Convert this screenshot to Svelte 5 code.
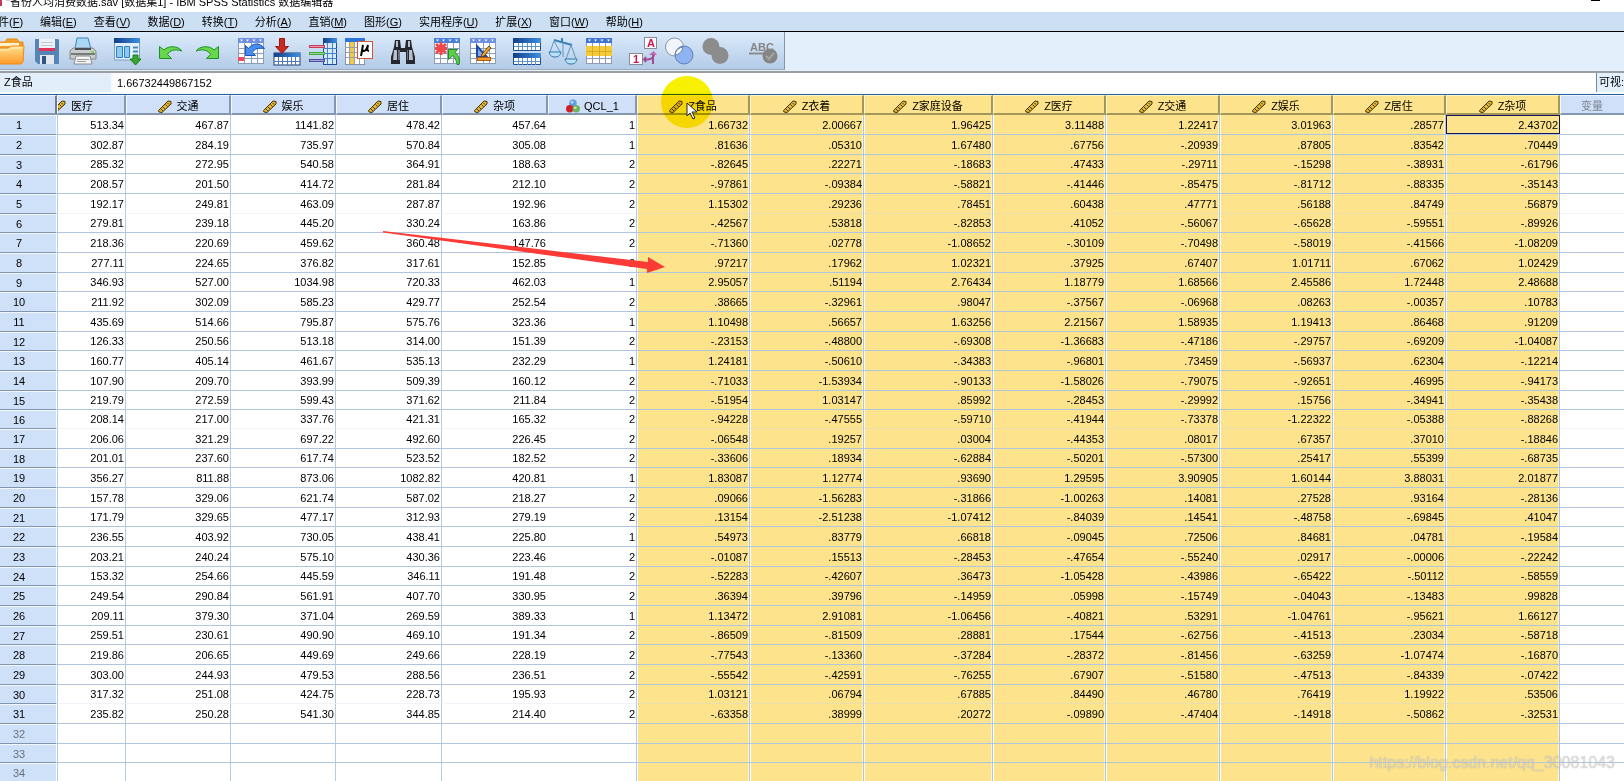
<script>
  const menus = [
    ['文件', 'F'], ['编辑', 'E'], ['查看', 'V'], ['数据', 'D'], ['转换', 'T'], ['分析', 'A'],
    ['直销', 'M'], ['图形', 'G'], ['实用程序', 'U'], ['扩展', 'X'], ['窗口', 'W'], ['帮助', 'H'],
  ];

  const toolGroups = [
    [['open', '打开'], ['save', '保存'], ['print', '打印']],
    [['recall', '重新调用对话框']],
    [['undo', '撤销'], ['redo', '重做']],
    [['gotocase', '转到个案'], ['gotovar', '转到变量'], ['vars', '变量'], ['stats', '运行描述统计']],
    [['find', '查找']],
    [['insertcase', '插入个案'], ['insertvar', '插入变量']],
    [['split', '拆分文件'], ['weight', '个案加权'], ['select', '选择个案']],
    [['labels', '值标签'], ['sets', '使用变量集'], ['all', '显示所有变量']],
    [['spell', '拼写检查']],
  ];

  const columns = [
    { name: '医疗', width: 69, clipped: true },
    { name: '交通', width: 105 },
    { name: '娱乐', width: 105 },
    { name: '居住', width: 106 },
    { name: '杂项', width: 106, open: true },
    { name: 'QCL_1', width: 89, nominal: true },
    { name: 'Z食品', width: 113, selected: true },
    { name: 'Z衣着', width: 114, selected: true },
    { name: 'Z家庭设备', width: 129, selected: true },
    { name: 'Z医疗', width: 113, selected: true },
    { name: 'Z交通', width: 114, selected: true },
    { name: 'Z娱乐', width: 113, selected: true },
    { name: 'Z居住', width: 113, selected: true },
    { name: 'Z杂项', width: 114, selected: true },
  ];

  const rows = `513.34 467.87 1141.82 478.42 457.64 1 1.66732 2.00667 1.96425 3.11488 1.22417 3.01963 .28577 2.43702
302.87 284.19 735.97 570.84 305.08 1 .81636 .05310 1.67480 .67756 -.20939 .87805 .83542 .70449
285.32 272.95 540.58 364.91 188.63 2 -.82645 .22271 -.18683 .47433 -.29711 -.15298 -.38931 -.61796
208.57 201.50 414.72 281.84 212.10 2 -.97861 -.09384 -.58821 -.41446 -.85475 -.81712 -.88335 -.35143
192.17 249.81 463.09 287.87 192.96 2 1.15302 .29236 .78451 .60438 .47771 .56188 .84749 .56879
279.81 239.18 445.20 330.24 163.86 2 -.42567 .53818 -.82853 .41052 -.56067 -.65628 -.59551 -.89926
218.36 220.69 459.62 360.48 147.76 2 -.71360 .02778 -1.08652 -.30109 -.70498 -.58019 -.41566 -1.08209
277.11 224.65 376.82 317.61 152.85 2 .97217 .17962 1.02321 .37925 .67407 1.01711 .67062 1.02429
346.93 527.00 1034.98 720.33 462.03 1 2.95057 .51194 2.76434 1.18779 1.68566 2.45586 1.72448 2.48688
211.92 302.09 585.23 429.77 252.54 2 .38665 -.32961 .98047 -.37567 -.06968 .08263 -.00357 .10783
435.69 514.66 795.87 575.76 323.36 1 1.10498 .56657 1.63256 2.21567 1.58935 1.19413 .86468 .91209
126.33 250.56 513.18 314.00 151.39 2 -.23153 -.48800 -.69308 -1.36683 -.47186 -.29757 -.69209 -1.04087
160.77 405.14 461.67 535.13 232.29 1 1.24181 -.50610 -.34383 -.96801 .73459 -.56937 .62304 -.12214
107.90 209.70 393.99 509.39 160.12 2 -.71033 -1.53934 -.90133 -1.58026 -.79075 -.92651 .46995 -.94173
219.79 272.59 599.43 371.62 211.84 2 -.51954 1.03147 .85992 -.28453 -.29992 .15756 -.34941 -.35438
208.14 217.00 337.76 421.31 165.32 2 -.94228 -.47555 -.59710 -.41944 -.73378 -1.22322 -.05388 -.88268
206.06 321.29 697.22 492.60 226.45 2 -.06548 .19257 .03004 -.44353 .08017 .67357 .37010 -.18846
201.01 237.60 617.74 523.52 182.52 2 -.33606 .18934 -.62884 -.50201 -.57300 .25417 .55399 -.68735
356.27 811.88 873.06 1082.82 420.81 1 1.83087 1.12774 .93690 1.29595 3.90905 1.60144 3.88031 2.01877
157.78 329.06 621.74 587.02 218.27 2 .09066 -1.56283 -.31866 -1.00263 .14081 .27528 .93164 -.28136
171.79 329.65 477.17 312.93 279.19 2 .13154 -2.51238 -1.07412 -.84039 .14541 -.48758 -.69845 .41047
236.55 403.92 730.05 438.41 225.80 1 .54973 .83779 .66818 -.09045 .72506 .84681 .04781 -.19584
203.21 240.24 575.10 430.36 223.46 2 -.01087 .15513 -.28453 -.47654 -.55240 .02917 -.00006 -.22242
153.32 254.66 445.59 346.11 191.48 2 -.52283 -.42607 .36473 -1.05428 -.43986 -.65422 -.50112 -.58559
249.54 290.84 561.91 407.70 330.95 2 .36394 .39796 -.14959 .05998 -.15749 -.04043 -.13483 .99828
209.11 379.30 371.04 269.59 389.33 1 1.13472 2.91081 -1.06456 -.40821 .53291 -1.04761 -.95621 1.66127
259.51 230.61 490.90 469.10 191.34 2 -.86509 -.81509 .28881 .17544 -.62756 -.41513 .23034 -.58718
219.86 206.65 449.69 249.66 228.19 2 -.77543 -.13360 -.37284 -.28372 -.81456 -.63259 -1.07474 -.16870
303.00 244.93 479.53 288.56 236.51 2 -.55542 -.42591 -.76255 .67907 -.51580 -.47513 -.84339 -.07422
317.32 251.08 424.75 228.73 195.93 2 1.03121 .06794 .67885 .84490 .46780 .76419 1.19922 .53506
235.82 250.28 541.30 344.85 214.40 2 -.63358 .38999 .20272 -.09890 -.47404 -.14918 -.50862 -.32531`
    .split('\n')
    .map((line) => line.split(' '));

  const blank = columns.map(() => '');
  const grid = [...rows, blank, blank, blank];
  const faintRows = [5, 16, 30];

  let active = $state({ row: 0, col: 13 });
  let cellValue = $state('1.66732449867152');
</script>

{#snippet gridLines(top)}
  <rect x="1" y="1" width="26" height="26" fill="#fff" />
  <rect x="1" y="1" width="26" height="5" fill={top} />
  <path d="M1.500 6V27M7.500 6V27M14.500 6V27M20.500 6V27M26.500 6V27M1 11.500H27M1 16.500H27M1 21.500H27M1 26.500H27" stroke="#8d9db8" fill="none" />
  <path d="M3 2.500h3l-1.500 2zM9 2.500h3l-1.500 2zM15.500 2.500h3l-1.500 2zM22 2.500h3l-1.500 2z" fill="#fff" />
{/snippet}

{#snippet toolIcon(name)}
  <svg class="tool-icon" viewBox="0 0 28 28" aria-hidden="true">
    {#if name === 'open'}
      <path d="M1 5h7l2-3h10l2 3h4v18H1z" fill="#f0a02a" stroke="#e8890f" />
      <path d="M3 6h19v3H3z" fill="#fff3cf" />
      <path d="M1 11h10l3-2h13l-1 16-2 2H1z" fill="url(#folder)" stroke="#f08a1c" />
      <path d="M2 13h10l3-2h10" stroke="#fff0c4" fill="none" />
    {:else if name === 'save'}
      <path d="M2 2h23l1 1v24H5l-3-3z" fill="#5586b3" />
      <rect x="6" y="2" width="16" height="12" fill="#eef1f8" />
      <path d="M8 5.500h12M8 8.500h12" stroke="#c3c8d6" />
      <rect x="6" y="11" width="16" height="3" fill="#e0325c" />
      <rect x="7" y="18" width="14" height="9" fill="#e4e8ee" />
      <rect x="9" y="19" width="4" height="8" fill="#2f557f" />
    {:else if name === 'print'}
      <path d="M8 1h11l3 11H6z" fill="#a9d7f4" stroke="#3f84ba" />
      <path d="M4 11h20l3 3v8H1v-8z" fill="#c9cbcc" stroke="#858789" />
      <rect x="6" y="11" width="16" height="2" fill="#4c4f51" />
      <path d="M2 17h24" stroke="#77797b" stroke-width="2" />
      <path d="M7 19h14l2 8H5z" fill="#f6f6f6" stroke="#8b8b8b" />
      <path d="M8 22.500h12M8 24.500h9" stroke="#999" />
      <rect x="22" y="14" width="3" height="2" fill="#7fdc52" />
    {:else if name === 'recall'}
      <rect x="1.500" y="2" width="25" height="21" fill="#dff0fb" stroke="#7f9fc0" />
      <rect x="1" y="1" width="26" height="5" fill="url(#bar)" />
      <path d="M3.500 9.500h6v11h-6zM11.500 9.500h5v11h-5z" fill="#8bc9f2" stroke="#2f7fc0" />
      <path d="M20 10.500h5M20 14.500h5" stroke="#4d87c2" stroke-width="2" />
      <path d="M20 18h5v4h3l-5.500 6-5.500-6h3z" fill="#36a72f" stroke="#1c7a1b" />
    {:else if name === 'undo'}
      <path d="M2.500 9.500v12h12l-4-4c2-4 7-6 14.500-3.500-4-5-13-6-18-1z" fill="#6ad64a" stroke="#17932a" />
    {:else if name === 'redo'}
      <path d="M25.500 9.500v12h-12l4-4c-2-4-7-6-14.500-3.500 4-5 13-6 18-1z" fill="#6ad64a" stroke="#17932a" />
    {:else if name === 'gotocase'}
      {@render gridLines('#6f8fe0')}
      <rect x="1" y="20" width="6" height="4" fill="#ee4a62" />
      <path d="M8.500 8.500v10h10l-3-3c2-4 6-5 12-4-4-6-12-6-16 0z" fill="#4a8df0" stroke="#1b56b8" />
    {:else if name === 'gotovar'}
      <rect x="1" y="16" width="26" height="12" fill="#fff" stroke="#1b3f78" />
      <rect x="1" y="16" width="26" height="4" fill="url(#bar)" />
      <path d="M5.500 20v8M9.500 20v8M14.500 20v8M18.500 20v8M22.500 20v8M1 24.500h26" stroke="#4e78b8" />
      <path d="M6.500 1.500h5v8h4l-6.500 7-6.500-7h4z" fill="#c92a24" stroke="#9c1a16" />
    {:else if name === 'vars'}
      <rect x="14.500" y="1.500" width="13" height="26" fill="#d5ebfc" stroke="#1d4f96" />
      <rect x="14" y="1" width="14" height="5" fill="url(#bar)" />
      <path d="M18.500 6v21M23.500 6v21M14 11.500h14M14 16.500h14M14 21.500h14" stroke="#4682c6" />
      <path d="M0 9.500h16" stroke="#c93a5c" stroke-width="3" />
      <path d="M0 16.500h16" stroke="#3fa836" stroke-width="3" />
      <path d="M0 23.500h16" stroke="#4b4ba5" stroke-width="3" />
      <path d="M1 9.500h14M1 16.500h14M1 23.500h14" stroke="#fff" stroke-opacity=".5" />
    {:else if name === 'stats'}
      <rect x="0.500" y="1.500" width="19" height="26" fill="#fff" stroke="#8794a8" />
      <rect x="0" y="1" width="20" height="4" fill="#2d74d8" />
      <rect x="4" y="5" width="5" height="22" fill="#f0c94a" />
      <path d="M4.500 5v22M9.500 5v22M14.500 5v22M0 10.500h20M0 15.500h20M0 20.500h20" stroke="#9a9fa8" />
      <rect x="12.500" y="4.500" width="15" height="17" fill="#fff" stroke="#d8553a" />
      <path d="M18 8l-2 11M18 8c-1 4-1 6 1 6s3-3 4-6c-1 4-1 6 1 6" stroke="#000" stroke-width="2" fill="none" />
    {:else if name === 'find'}
      <path d="M6 3h5l1 8h4l1-8h5l1 7 3 10v7h-9V15h-6v12H2v-7l3-10z" fill="#25272d" />
      <path d="M7 4h2v6H7zM19 4h2v6h-2zM5 13h3v10H4zM20 13h3l1 10h-4z" fill="#b9bfcc" />
      <path d="M9 13h2v10H9zM18 13h1v10h-1z" fill="#6c7280" />
    {:else if name === 'insertcase'}
      {@render gridLines('#4a7fdc')}
      <path d="M8 5v13M3 7l10 9M13 7L3 16M2 11.500h12" stroke="#f04848" stroke-width="3" />
      <path d="M15.500 12.500h9l-2.500 3c4 3 5 7 4 12h-2c-1-5-2-7-4-9l-4.500 4z" fill="#5fd044" stroke="#1e8a2b" />
    {:else if name === 'insertvar'}
      {@render gridLines('#6f8fe0')}
      <path d="M8 9v11h10z" fill="#7fa8ea" stroke="#1b4ba5" stroke-width="2" />
      <path d="M20 9l2 2-7 8-3 1 1-3z" fill="#eea42a" stroke="#6b4310" />
      <rect x="8.500" y="20.500" width="13" height="3" fill="#f39a2c" stroke="#b35a08" />
    {:else if name === 'split'}
      <path d="M.5 1.500h27v12H.5zM.5 16.500h27v11H.5z" fill="#fff" stroke="#1d4f96" />
      <path d="M0 1h28v5H0zM0 16h28v5H0z" fill="url(#bar)" />
      <path d="M5.500 6v7M9.500 6v7M14.500 6v7M18.500 6v7M22.500 6v7M1 9.500h26M5.500 21v7M9.500 21v7M14.500 21v7M18.500 21v7M22.500 21v7M1 24.500h26" stroke="#5b93cc" />
    {:else if name === 'weight'}
      <path d="M13 1v5M5 3l18 5" stroke="#3c80b5" stroke-width="2" fill="none" />
      <path d="M5 4L1 15M5 4l6 11M22 8l-5 14M22 8l5 14M14 6v14" stroke="#5b97c4" fill="none" />
      <path d="M0 15h12c-1 4-3 5-6 5s-5-1-6-5zM16 22h12c-1 4-3 5-6 5s-5-1-6-5z" fill="#b9e2f5" stroke="#2f78ae" />
    {:else if name === 'select'}
      {@render gridLines('#3f74d0')}
      <rect x="1" y="9" width="26" height="10" fill="#f4cb3c" />
      <path d="M1 14.500h26M7.500 9v10M14.500 9v10M20.500 9v10" stroke="#d9ab24" />
    {:else if name === 'labels'}
      <rect x="15.500" y=".5" width="12" height="11" fill="#fff" stroke="#8b8b95" />
      <text x="22" y="10" class="glyph">A</text>
      <rect x=".5" y="16.500" width="13" height="11" fill="#fff" stroke="#8b8b95" />
      <text x="7" y="26" class="glyph">1</text>
      <path d="M24 27V17M15 22.500h5M17 20l-2 2.500 2 2.500M25 17c0 4-3 5-6 5.500" stroke="#a04a94" stroke-width="2" fill="none" />
      <path d="M20 18l4.500-4 3.500 4z" fill="#c266b4" />
    {:else if name === 'sets'}
      <circle cx="9.500" cy="10" r="9" fill="#f3f5fa" stroke="#8a94a8" />
      <circle cx="19" cy="18" r="9" fill="#8fb3f0" stroke="#5f7fb5" />
      <path d="M10 18a9 9 0 0 1 8-8 9 9 0 0 1-8 8z" fill="#fff" stroke="#6681ab" />
    {:else if name === 'all'}
      <circle cx="10" cy="9.500" r="8.500" fill="#8c8c8c" />
      <circle cx="19" cy="18.500" r="8.500" fill="#8c8c8c" />
    {:else}
      <text x="13" y="14" class="glyph abc">ABC</text>
      <path d="M0 16.500h16" stroke="#8a8a8a" stroke-width="2" />
      <circle cx="21" cy="19" r="7.500" fill="#858585" />
      <path d="M17 19l3 3 5-6" stroke="#a5a5a5" stroke-width="2" fill="none" />
    {/if}
  </svg>
{/snippet}

{#snippet scaleIcon()}
  <svg class="measure" viewBox="0 0 14 13" aria-hidden="true">
    <path d="M.5 10.500L10 1l3 .5V4L4 12.500 1 12z" fill="#e9b92c" stroke="#3e3210" />
    <path d="M3 9l2 2M5 7l2 2M7.500 4.500l2 2M9.500 3l1.500 1.500" stroke="#3e3210" />
  </svg>
{/snippet}

{#snippet nominalIcon()}
  <svg class="measure nominal" viewBox="0 0 16 15" aria-hidden="true">
    <circle cx="8" cy="4.500" r="4" fill="#5b9fe0" />
    <circle cx="4.500" cy="10.500" r="4" fill="#cf1f2c" />
    <circle cx="11.500" cy="10.500" r="4" fill="#6cb35c" />
    <circle cx="7" cy="3.500" r="1.500" fill="#b5d7f7" />
    <circle cx="10.500" cy="9.500" r="1.500" fill="#c4e6b8" />
  </svg>
{/snippet}

<svg class="defs" width="0" height="0" aria-hidden="true">
  <defs>
    <linearGradient id="folder" x1="0" y1="0" x2="0" y2="1">
      <stop offset="0" stop-color="#ffe08a" />
      <stop offset="1" stop-color="#fb9a2a" />
    </linearGradient>
    <linearGradient id="bar" x1="0" y1="0" x2="1" y2="0">
      <stop offset="0" stop-color="#123f88" />
      <stop offset="1" stop-color="#3f8fe0" />
    </linearGradient>
  </defs>
</svg>

<div class="window">
  <header class="title">
    <span class="app-mark"></span>
    <span class="caption">"省份人均消费数据.sav [数据集1] - IBM SPSS Statistics 数据编辑器</span>
    <button class="minimize" aria-label="最小化"></button>
  </header>

  <nav class="menu">
    {#each menus as [label, key]}
      <button>{label}(<u>{key}</u>)</button>
    {/each}
  </nav>

  <div class="tool-row">
    <div class="toolbar" role="toolbar">
      {#each toolGroups as group}
        <div class="group">
          {#each group as [icon, label]}
            <button class:wide={icon === 'spell'} aria-label={label}>{@render toolIcon(icon)}</button>
          {/each}
        </div>
      {/each}
    </div>
  </div>

  <div class="cell-bar">
    <label for="cell-editor">Z食品</label>
    <input id="cell-editor" bind:value={cellValue} />
    <span class="visible">可视:</span>
  </div>

  <main>
    <table>
      <colgroup>
        <col style="width: 57px" />
        {#each columns as c}
          <col style="width: {c.width}px" />
        {/each}
        <col />
      </colgroup>
      <thead>
        <tr>
          <th class="corner"></th>
          {#each columns as c}
            <th class:selected={c.selected}>
              <div class="head" class:clipped={c.clipped}>
                {#if c.nominal}{@render nominalIcon()}{:else}{@render scaleIcon()}{/if}
                <span>{c.name}</span>
              </div>
            </th>
          {/each}
          <th class="unused"><div class="head">变量</div></th>
        </tr>
      </thead>
      <tbody>
        {#each grid as row, r}
          <tr class:faint={faintRows.includes(r + 1)}>
            <th class:unused={r >= rows.length}>{r + 1}</th>
            {#each row as value, c}
              <td
                class:selected={columns[c].selected}
                class:open={columns[c].open}
                class:active={active.row === r && active.col === c}
              >{value}</td>
            {/each}
            <td></td>
          </tr>
        {/each}
      </tbody>
    </table>
  </main>

  <div class="highlight"></div>
  <svg class="pointer" viewBox="0 0 12 18" aria-hidden="true">
    <path d="M1 1v13l3-3 3 6 2-1-3-6h5z" fill="#fff" stroke="#222" />
  </svg>
  <svg class="arrow" viewBox="0 0 282 44" aria-hidden="true">
    <path d="M0 0L265 31V26L282 36 264 42V38L0 1.500z" fill="#fc3a36" />
  </svg>
  <div class="watermark">https://blog.csdn.net/qq_30081043</div>
</div>

<style>
  :global(body) {
    overflow: hidden;
    background: #fff;
  }

  .window {
    position: relative;
    display: flex;
    flex-direction: column;
    height: 100vh;
    overflow: hidden;
    font: 11px/14px "Liberation Sans", "Noto Sans CJK SC", sans-serif;
    color: #000;
  }

  .defs {
    position: absolute;
  }

  button {
    margin: 0;
    padding: 0;
    border: 0;
    background: none;
    font: inherit;
    color: inherit;
  }

  .title {
    display: flex;
    align-items: flex-end;
    gap: 4px;
    height: 12px;
    padding-right: 24px;
  }

  .app-mark {
    align-self: flex-start;
    width: 2px;
    height: 6px;
    background: #c33a58;
  }

  .caption {
    flex: 1;
    padding-bottom: 3px;
    white-space: nowrap;
  }

  .minimize {
    align-self: flex-start;
    width: 9px;
    height: 1px;
    background: #000;
  }

  .menu {
    display: flex;
    gap: 17px;
    height: 20px;
    padding-top: 1px;
    margin-left: -13px;
    box-sizing: border-box;
    background: #ccdff3;
    border-bottom: 1px solid #000;
  }

  .menu button {
    white-space: nowrap;
  }

  .tool-row {
    display: flex;
    background: #e3effb;
    border-bottom: 2px solid #9a9fa6;
  }

  .toolbar {
    display: flex;
    gap: 8px;
    height: 38px;
    margin-bottom: 1px;
    margin-left: -7px;
    background: linear-gradient(#dcebfb, #b3cbe7);
    border-right: 1px solid #8a94a2;
    border-bottom: 1px solid #a3adba;
    box-sizing: border-box;
  }

  .group {
    display: flex;
  }

  .group button {
    display: flex;
    align-items: center;
    justify-content: center;
    width: 36px;
  }

  .group button.wide {
    width: 43px;
  }

  .tool-icon {
    width: 28px;
    height: 28px;
    overflow: visible;
  }

  .glyph {
    font: bold 11px "Liberation Sans", sans-serif;
    fill: #d0154f;
    text-anchor: middle;
  }

  .glyph.abc {
    fill: #858585;
  }

  .cell-bar {
    display: flex;
    height: 19px;
    padding-bottom: 2px;
    background: #f6fafd;
    border-bottom: 1px solid #2a5f9e;
  }

  .cell-bar label {
    flex: none;
    box-sizing: border-box;
    width: 113px;
    padding: 2px 4px;
    background: #e3eefb;
    border-right: 2px solid #f6fafd;
  }

  .cell-bar input {
    flex: 1;
    min-width: 0;
    padding: 0 4px;
    border: 0;
    outline: 0;
    background: #fff;
    font: inherit;
    color: inherit;
  }

  .cell-bar .visible {
    width: 25px;
    padding: 2px 0 0 2px;
    background: #e3effb;
    border-left: 1px solid #7d8894;
    white-space: nowrap;
  }

  main {
    flex: 1;
    min-height: 0;
    overflow: hidden;
  }

  table {
    width: 100%;
    table-layout: fixed;
    border-spacing: 0;
  }

  th,
  td {
    box-sizing: border-box;
    height: 20px;
    padding: 0;
    overflow: hidden;
    font-weight: normal;
    line-height: 14px;
    white-space: nowrap;
  }

  tbody tr:nth-child(3n) > *,
  tbody tr:nth-child(16) > * {
    height: 19px;
  }

  thead th {
    height: 20px;
    background: #cfe0f8;
    border-top: 1px solid #eef5fd;
    border-right: 2px solid #8496b0;
    border-bottom: 2px solid #8496b0;
    border-left: 1px solid #f4f8fe;
  }

  thead th.selected {
    background: #fde48c;
    border-color: #fff3c0 #a3975c #a3975c #fff7d4;
  }

  thead .corner {
    border-right-color: #6e7c92;
    border-left: 0;
  }

  thead .unused {
    padding-right: 1px;
    color: #7e8794;
    border-right: 0;
  }

  .head {
    display: flex;
    align-items: center;
    justify-content: center;
    gap: 5px;
    padding-top: 3px;
  }

  .head.clipped {
    justify-content: flex-end;
    padding-right: 31px;
  }

  .measure {
    flex: none;
    width: 14px;
    height: 13px;
  }

  .measure.nominal {
    width: 16px;
    height: 14px;
    margin-right: -2px;
  }

  tbody th {
    padding-right: 18px;
    background: #cfe0f9;
    background-clip: padding-box;
    border-top: 1px solid #f2f7fe;
    border-right: 1px solid #fff;
    border-bottom: 1px solid #7f95b2;
    text-align: center;
  }

  tbody th.unused {
    color: #68717e;
  }

  td {
    padding-right: 1px;
    border-right: 1px solid #b4cbe2;
    border-bottom: 1px solid #b0c6de;
    text-align: right;
  }

  td:nth-child(2) {
    border-left: 1px solid #b4cbe2;
  }

  td:last-child {
    border-right: 0;
  }

  td.open {
    padding-right: 2px;
    border-right: 0;
  }

  td.selected {
    background: #fde48c;
    border-right-color: #a9c8e2;
    box-shadow: inset 1px 0 #fff, inset -1px 0 #fff3c4;
  }

  .faint td {
    border-bottom-color: #eef4fa;
  }

  .faint td.selected {
    border-bottom-color: #eadfae;
  }

  td.active {
    padding-right: 2px;
    border-right: 0;
    box-shadow: inset 0 0 0 1px #16125e;
  }

  .highlight {
    position: absolute;
    top: 76px;
    left: 661px;
    width: 52px;
    height: 52px;
    border-radius: 50%;
    background: #f7f000;
    mix-blend-mode: multiply;
  }

  .pointer {
    position: absolute;
    top: 102px;
    left: 686px;
    width: 12px;
    height: 18px;
  }

  .arrow {
    position: absolute;
    top: 231px;
    left: 383px;
    width: 282px;
    height: 44px;
  }

  .watermark {
    position: absolute;
    right: 9px;
    bottom: 8px;
    font-size: 16px;
    line-height: 20px;
    color: rgba(255, 255, 255, 0.6);
    text-shadow: 0 0 1px rgba(0, 0, 0, 0.4);
  }
</style>
